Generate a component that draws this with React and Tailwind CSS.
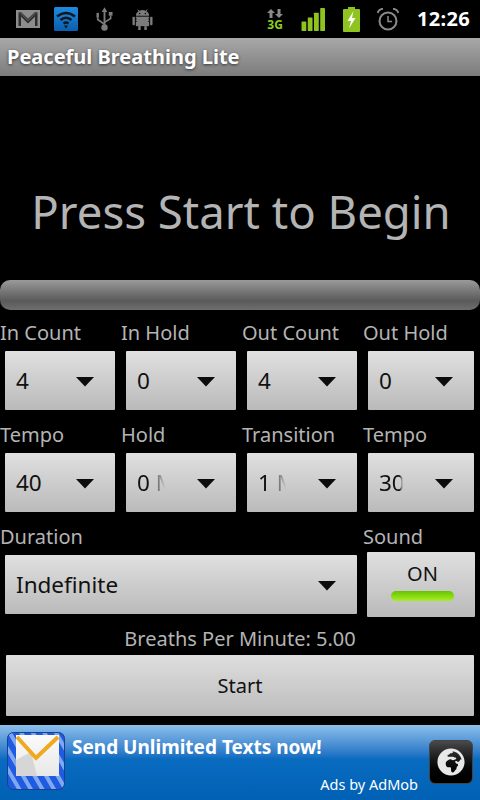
import { FaGlobeAfrica } from 'react-icons/fa'

const FONT = "font-['Noto_Sans','Open_Sans',sans-serif]"

function GmailIcon() {
  return (
    <svg width="25" height="19" viewBox="0 0 25 19" className="ml-4">
      <rect x="0" y="0" width="24" height="18" fill="#8c8c8c" />
      <path d="M2.5 2 L12 11 L21.5 2 L21.5 16 L19 16 L19 6.5 L12 13.5 L5 6.5 L5 16 L2.5 16 Z" fill="#2c2c2c" />
      <path d="M2.5 2 L5 2 L12 8.5 L19 2 L21.5 2 L12 11 Z" fill="#444" />
    </svg>
  )
}

function WifiIcon() {
  return (
    <svg width="24" height="24" viewBox="0 0 24 24" className="ml-[13px]">
      <defs>
        <linearGradient id="wifibg" x1="0" y1="0" x2="0" y2="1">
          <stop offset="0" stopColor="#1f8be0" />
          <stop offset="1" stopColor="#0a5fae" />
        </linearGradient>
      </defs>
      <rect width="24" height="24" rx="1.5" fill="url(#wifibg)" />
      <g fill="none" stroke="#10181f" strokeWidth="2.6">
        <path d="M3 9.5 Q12 2.5 21 9.5" />
        <path d="M6.5 13 Q12 8.5 17.5 13" />
        <path d="M9.5 16.5 Q12 14.5 14.5 16.5" />
      </g>
      <path d="M10 18.5 L14 18.5 L12 21.5 Z" fill="#10181f" />
    </svg>
  )
}

function UsbIcon() {
  return (
    <svg width="17" height="25" viewBox="0 0 18 26" className="ml-[18px]">
      <g fill="#7c7c7c">
        <path d="M9 0 L12 5 L10 5 L10 19 L8 19 L8 5 L6 5 Z" />
        <circle cx="9" cy="21.5" r="3.4" />
        <rect x="13.5" y="5" width="4" height="4" />
        <rect x="0.5" y="6" width="2.6" height="5" />
      </g>
      <path d="M15.5 9 L15.5 12 L9 16 M1.8 11 L1.8 13 L9 18" fill="none" stroke="#7c7c7c" strokeWidth="1.7" />
    </svg>
  )
}

function AndroidIcon() {
  return (
    <svg width="21" height="21" viewBox="0 0 22 22" className="ml-[19px]">
      <g fill="#7c7c7c">
        <path d="M4 7 A7 6 0 0 1 18 7 Z" />
        <rect x="4" y="8" width="14" height="10" />
        <rect x="0.5" y="8" width="2.5" height="9" rx="1" />
        <rect x="19" y="8" width="2.5" height="9" rx="1" />
        <rect x="6.5" y="18" width="2.6" height="4" />
        <rect x="12.9" y="18" width="2.6" height="4" />
      </g>
      <path d="M6 0.5 L8 3 M16 0.5 L14 3" stroke="#7c7c7c" strokeWidth="1" />
      <circle cx="8" cy="4.6" r="0.8" fill="#000" />
      <circle cx="14" cy="4.6" r="0.8" fill="#000" />
      <path d="M3.5 10.5 H5 M3.5 13 H5 M17 10.5 H18.5 M17 13 H18.5" stroke="#000" strokeWidth="1" />
    </svg>
  )
}

function DataIcon() {
  return (
    <div className="flex w-[18px] flex-col items-center">
      <svg width="16" height="9" viewBox="0 0 16 9">
        <path d="M4 0 L8 4 L5.5 4 L5.5 9 L2.5 9 L2.5 4 L0 4 Z" fill="#8a8a8a" />
        <path d="M12 9 L16 5 L13.5 5 L13.5 0 L10.5 0 L10.5 5 L8 5 Z" fill="#8a8a8a" />
      </svg>
      <span className="mt-[1px] text-[12px] leading-[11px] font-bold text-[#8fce1c]">3G</span>
    </div>
  )
}

function SignalIcon() {
  return (
    <svg width="25" height="23" viewBox="0 0 25 24">
      <g fill="#8fc31f">
        <rect x="0" y="14" width="5" height="10" rx="0.5" />
        <rect x="6.5" y="10" width="5" height="14" rx="0.5" />
        <rect x="13" y="5" width="5" height="19" rx="0.5" />
        <rect x="19.5" y="0" width="5" height="24" rx="0.5" />
      </g>
    </svg>
  )
}

function BatteryIcon() {
  return (
    <svg width="17" height="25" viewBox="0 0 17 25">
      <rect x="5" y="0" width="7" height="2" fill="#8fc31f" />
      <rect x="0" y="2" width="17" height="23" rx="1" fill="#8fc31f" />
      <path d="M10.5 4 L4.5 14 L8 14 L6 21.5 L12.5 11 L9 11 Z" fill="#fff" />
    </svg>
  )
}

function AlarmIcon() {
  return (
    <svg width="22" height="23" viewBox="0 0 22 23">
      <circle cx="11" cy="13" r="8.5" fill="none" stroke="#8a8a8a" strokeWidth="2" />
      <path d="M11 8 L11 13.5 L15 13.5" fill="none" stroke="#8a8a8a" strokeWidth="1.5" />
      <path d="M0.5 5 Q2 1 6 0.8 M21.5 5 Q20 1 16 0.8" fill="none" stroke="#8a8a8a" strokeWidth="2" />
    </svg>
  )
}

function Caret() {
  return (
    <svg width="18" height="10" viewBox="0 0 18 10" className="absolute top-1/2 right-[21px] -mt-[4px]">
      <path d="M0 0 L18 0 L9 9.5 Z" fill="#0c0c0c" />
    </svg>
  )
}

function Spinner({ value, clip }) {
  return (
    <div className="relative h-[59px] rounded-[1px] bg-linear-to-b from-[#e0e0e0] to-[#bababa]">
      <div className="flex h-full items-center pl-[11px]">
        <span className={`text-[22.5px] whitespace-nowrap text-[#111] ${clip || ''}`}>{value}</span>
      </div>
      <Caret />
    </div>
  )
}

const FADE_MIN = 'w-[28px] overflow-hidden [mask-image:linear-gradient(to_right,black_45%,transparent)]'
const FADE_BPM = 'w-[24px] overflow-hidden [mask-image:linear-gradient(to_right,black_85%,transparent)]'

function Field({ label, value, clip }) {
  return (
    <div>
      <div className="h-[33px] text-[20px] leading-[30px] text-[#b4b4b4]">{label}</div>
      <div className="pr-[6px] pl-[5px]">
        <Spinner value={value} clip={clip} />
      </div>
    </div>
  )
}

function AdIcon() {
  return (
    <svg width="58" height="58" viewBox="0 0 58 58" className="shrink-0">
      <defs>
        <pattern id="stripes" width="10" height="10" patternUnits="userSpaceOnUse" patternTransform="rotate(-30)">
          <rect width="10" height="10" fill="#1f5be0" />
          <rect width="4" height="10" fill="#7fa8ee" />
        </pattern>
        <linearGradient id="paper" x1="0" y1="0" x2="0" y2="1">
          <stop offset="0" stopColor="#fafafa" />
          <stop offset="1" stopColor="#e8e8e8" />
        </linearGradient>
      </defs>
      <rect x="0.5" y="0.5" width="57" height="57" rx="6" fill="url(#stripes)" stroke="#1b3f8f" />
      <rect x="9" y="3" width="43" height="41" fill="url(#paper)" />
      <path d="M9 44 L9 28 L24 20 L30 44 Z" fill="#d6d6d6" />
      <path d="M10 5 L29 26 L51 5" fill="none" stroke="#f0a81c" strokeWidth="4" />
    </svg>
  )
}

export default function App() {
  return (
    <div className={`${FONT} flex h-[800px] w-[480px] flex-col overflow-hidden bg-black`}>
      {/* status bar */}
      <div className="flex h-[38px] items-center bg-black">
        <GmailIcon />
        <WifiIcon />
        <UsbIcon />
        <AndroidIcon />
        <div className="ml-auto flex items-center gap-[18px] pr-[10px]">
          <div className="flex items-center gap-[17px]">
            <DataIcon />
            <SignalIcon />
            <BatteryIcon />
            <AlarmIcon />
          </div>
          <span className="text-[20px] leading-none font-bold tracking-[0.3px] text-white">12:26</span>
        </div>
      </div>

      {/* title bar */}
      <div className="flex h-[38px] items-center bg-linear-to-b from-[#a8a8a8] to-[#7c7c7c] pl-[7px]">
        <span className="text-[20px] font-bold text-white [text-shadow:0_1px_3px_#333]">Peaceful Breathing Lite</span>
      </div>

      {/* message */}
      <div className="flex h-[204px] items-center justify-center pt-[68px] pl-[2px]">
        <span className="text-[45.5px] leading-none text-[#b4b4b4]">Press Start to Begin</span>
      </div>

      {/* progress bar */}
      <div className="h-[30px] rounded-[10px] bg-linear-to-b from-[#9a9a9a] via-[#5a5a5a] via-70% to-[#6e6e6e]" />

      {/* spinners */}
      <div className="mt-[8px] grid grid-cols-[121px_121px_121px_117px] gap-y-[10px]">
        <Field label="In Count" value="4" />
        <Field label="In Hold" value="0" />
        <Field label="Out Count" value="4" />
        <Field label="Out Hold" value="0" />
        <Field label="Tempo" value="40" />
        <Field label="Hold" value="0 Min" clip={FADE_MIN} />
        <Field label="Transition" value="1 Min" clip={FADE_MIN} />
        <Field label="Tempo" value="30 BPM" clip={FADE_BPM} />
      </div>

      {/* duration and sound */}
      <div className="mt-[10px] flex">
        <div className="w-[363px]">
          <Field label="Duration" value="Indefinite" />
        </div>
        <div className="w-[117px]">
          <div className="h-[30px] text-[20px] leading-[30px] text-[#b4b4b4]">Sound</div>
          <div className="ml-[4px] flex h-[65px] w-[108px] flex-col items-center rounded-[1px] bg-linear-to-b from-[#e0e0e0] to-[#bababa] pl-[3px]">
            <span className="mt-[9px] text-[20px] leading-[26px] text-[#111]">ON</span>
            <div className="mt-[4px] h-[10px] w-[63px] rounded-[5px] bg-linear-to-b from-[#66c400] to-[#a6ee22]" />
          </div>
        </div>
      </div>

      {/* bpm */}
      <div className="mt-[8px] text-center text-[20px] leading-[28px] text-[#b4b4b4]">Breaths Per Minute: 5.00</div>

      {/* start */}
      <div className="mx-[6px] mt-[2px] flex h-[61px] items-center justify-center rounded-[1px] bg-linear-to-b from-[#dedede] to-[#bcbcbc] text-[20px] text-[#111]">
        Start
      </div>

      {/* ad */}
      <div className="mt-[9px] flex h-[75px] bg-linear-to-b from-[#8cc0ec] via-[#0a6cc0] via-45% to-[#0060b4] pt-[7px] pl-[7px]">
        <AdIcon />
        <div className="relative flex-1">
          <div className="ml-[7px] text-[19px] leading-[30px] font-bold text-white">Send Unlimited Texts now!</div>
          <div className="absolute top-[42px] right-[62px] text-[14.5px] leading-[20px] text-white">Ads by AdMob</div>
          <div className="absolute top-[8px] right-[7px] flex h-[44px] w-[44px] items-center justify-center rounded-[6px] border border-[#444] bg-linear-to-b from-[#4a4a4a] via-[#111] to-black">
            <FaGlobeAfrica className="text-[28px] text-[#e8e8e8]" />
          </div>
        </div>
      </div>
    </div>
  )
}
